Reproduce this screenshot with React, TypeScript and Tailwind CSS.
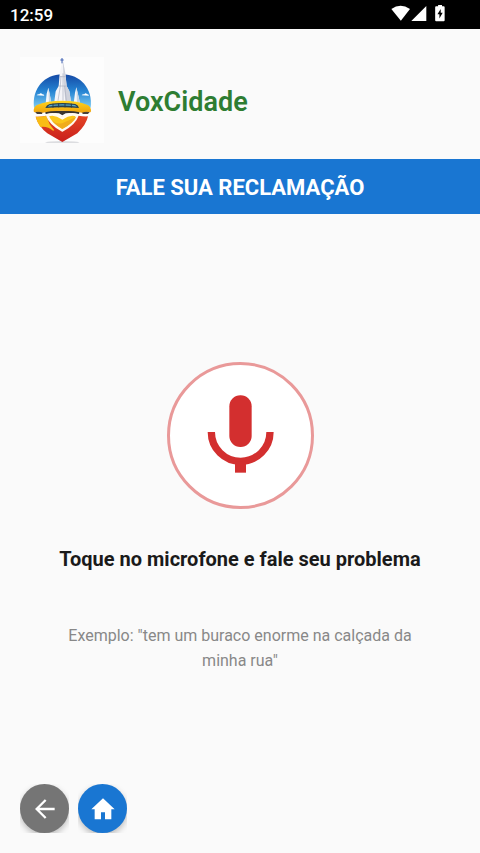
import type { ReactNode } from "react";

const Logo = () => (
  <svg viewBox="15 21 252 258" className="h-[86px] w-[84px] shrink-0 bg-[#fdfdfd]" role="img" aria-label="VoxCidade">
    <defs>
      <linearGradient id="sky" x1="0" y1="0" x2="0" y2="1">
        <stop offset="0" stopColor="#1549a5" />
        <stop offset="0.5" stopColor="#2583d2" />
        <stop offset="1" stopColor="#7ccbf2" />
      </linearGradient>
      <linearGradient id="bridge" x1="0" y1="0" x2="0" y2="1">
        <stop offset="0" stopColor="#ffd51f" />
        <stop offset="1" stopColor="#efa30c" />
      </linearGradient>
      <linearGradient id="red" x1="0" y1="0" x2="0" y2="1">
        <stop offset="0" stopColor="#e64825" />
        <stop offset="1" stopColor="#c91f1c" />
      </linearGradient>
    </defs>
    <ellipse cx="142" cy="277" rx="52" ry="4" fill="#dcdde0" />
    <path d="M57 173C50 116 88 73 142 73s92 43 85 100Z" fill="url(#sky)" />
    {/* clouds */}
    <path d="M65 136q4-5 8-3 4-6 9 0 4-1 6 4ZM200 136q3-5 8-3 4-6 8 0 4-1 6 4Z" fill="#fff" />
    {/* side towers */}
    <path d="m92 160 3-29 5-18 4 18 5 29ZM176 160l4-32 4-16 4 16 7 32Z" fill="#f4f7fb" />
    <path d="m100 113 4 18 5 29h-7ZM184 112l4 16 7 32h-9Z" fill="#c6d4e2" />
    {/* main tower */}
    <path d="m117 162 5-38 9-16 3-38 9-42 8 42 4 38 8 15 6 39Z" fill="#f4f4f8" />
    <path d="m143 28 8 42 4 38 8 15 6 39h-17l-4-38Z" fill="#cfd2dc" />
    <path d="m138 78-2 30-7 44M144 70v82M149 108l5 44M135 80h17M131 108h24" stroke="#abafbf" strokeWidth="2" fill="none" />
    <path d="M141 24v16M136 30h10" stroke="#3e60b3" strokeWidth="3" />
    {/* bridge */}
    <path d="M58 184h26l-3 8H66ZM200 184h26l-7 8h-16Z" fill="#4a4038" />
    <path d="M90 182h104l-2 10-26-3-14 1-10 6-10-6-14-1-26 3Z" fill="#38332f" />
    <path
      d="M56 184q-1-15 12-20 28-12 74-12t74 12q13 5 12 20l-2 3q-12-4-26 1-18-6-58-6t-58 6q-14-5-26-1Z"
      fill="url(#bridge)"
    />
    <path d="M91 174q3-9 13-12 38-6 77 0 9 3 11 12-50-5-101 0Z" fill="#253f50" />
    <path d="M98 170q44-7 88 0l-6-5q-38-5-76 0Z" fill="#5aa9c4" />
    <path d="M114 161v12M131 160v12M150 160v12M169 161v12" stroke="#263f4b" strokeWidth="3" />
    {/* lower pin */}
    <path
      d="M62 200q16 1 32-3 14-10 30-4l18 8 18-8q16-6 30 4 16 3 29 2-5 25-32 51l-45 26-45-26q-28-23-35-50Z"
      fill="url(#red)"
    />
    <path d="M62 200q16 1 32-3l10 26 14 18-4 1q-16-14-38-11-10-15-14-31Z" fill="#f9bc15" />
    <path
      d="M142 241q-37-20-45-45 23-9 45 9 22-18 45-9-8 25-45 45Z"
      fill="#fac61b"
      stroke="#fffaf0"
      strokeWidth="8"
      strokeLinejoin="round"
    />
    <path d="M184 200q-9 20-42 37-22-12-32-26 17 15 35 7 17-7 39-18Z" fill="#f0ac1b" />
  </svg>
);

const StatusIcons = () => (
  <svg viewBox="0 0 163 52" className="mb-[2px] h-[17px] w-[54px]" fill="#fff" aria-hidden="true">
    <path d="M0 12Q28-8 57 12L29 48Z" />
    <path d="M107 3v46H61Z" />
    <path
      fillRule="evenodd"
      d="M143 0h12v4h5q3 0 3 3v40q0 3-3 3h-23q-3 0-3-3V7q0-3 3-3h6ZM151 12l-10 16h6v13l10-17h-6Z"
    />
  </svg>
);

const MicIcon = () => (
  <svg viewBox="27 30 423 423" className="size-full" aria-hidden="true">
    <rect x="205" y="121" width="67" height="155" rx="33" fill="#d32f2f" />
    <path d="M151 231a88 88 0 0 0 176 0" fill="none" stroke="#d32f2f" strokeWidth="22" />
    <path d="M222 320h33v33h-33Z" fill="#d32f2f" />
  </svg>
);

type RoundButtonProps = {
  label: string;
  color: string;
  children: ReactNode;
};

const RoundButton = ({ label, color, children }: RoundButtonProps) => (
  <div className="size-[49px] overflow-hidden">
    <button
      type="button"
      aria-label={label}
      className={`flex size-full items-center justify-center rounded-full shadow-[0_3px_6px_rgba(0,0,0,0.25)] ${color}`}
    >
      {children}
    </button>
  </div>
);

const App = () => {
  return (
    <div className="flex min-h-screen flex-col bg-[#fafafa] font-['Roboto',sans-serif]">
      <div className="flex h-[29px] items-center justify-between bg-black pr-[35px] pl-[10px] text-white">
        <span className="text-[17px] leading-5 font-medium">12:59</span>
        <StatusIcons />
      </div>

      <header className="flex items-center gap-[14px] px-5 pt-7 pb-4">
        <Logo />
        <h1 className="pt-1 text-[27px] leading-8 font-semibold text-[#2e7d32]">VoxCidade</h1>
      </header>

      <div className="bg-[#1976d2] pt-[15px] pb-3 text-center">
        <h2 className="text-[22px] leading-7 font-bold text-white">FALE SUA RECLAMAÇÃO</h2>
      </div>

      <main className="flex flex-1 flex-col items-center px-14 pt-[148px] text-center">
        <button
          type="button"
          aria-label="Falar"
          className="size-[147px] rounded-full border-3 border-[#e99999] bg-white"
        >
          <MicIcon />
        </button>
        <p className="mt-9 text-[20px] leading-7 font-bold whitespace-nowrap text-[#1a1a1a]">
          Toque no microfone e fale seu problema
        </p>
        <p className="mt-[50px] text-[16px] leading-[25px] text-[#888888]">
          Exemplo: "tem um buraco enorme na calçada da minha rua"
        </p>
      </main>

      <nav className="flex gap-[9px] px-5 pb-5">
        <RoundButton label="Voltar" color="bg-[#757575]">
          <svg viewBox="0 0 60 60" className="size-5" fill="none" stroke="#fff" strokeWidth="7" aria-hidden="true">
            <path d="M59 30H6M32 3 5 30l27 27" />
          </svg>
        </RoundButton>
        <RoundButton label="Início" color="bg-[#1976d2]">
          <svg viewBox="0 0 72 66" className="h-[22px] w-6" fill="#fff" aria-hidden="true">
            <path d="M36 1 1 34h10v30h19V43h12v21h19V34h10Z" />
          </svg>
        </RoundButton>
      </nav>
    </div>
  );
};

export default App;
